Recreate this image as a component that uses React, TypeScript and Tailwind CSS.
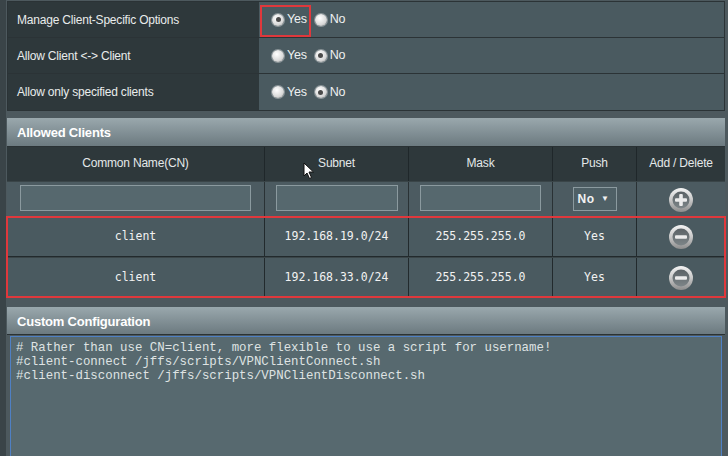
import React from 'react'

function Radio({ checked }: { checked?: boolean }) {
  return (
    <span className="relative inline-flex size-[12px] items-center justify-center rounded-full bg-[radial-gradient(circle_at_40%_35%,#ffffff,#d9d9d9_60%,#9a9a9a)] shadow-[0_0_0_1px_#8a9498]">
      {checked && <span className="size-[5px] rounded-full bg-[#4a4a4a]" />}
    </span>
  )
}

function RoundButton({ kind }: { kind: 'add' | 'del' }) {
  return (
    <svg width="26" height="26" viewBox="0 0 26 26">
      <defs>
        <linearGradient id={`ring-${kind}`} x1="0" y1="0" x2="0" y2="1">
          <stop offset="0" stopColor="#f4f4f4" />
          <stop offset="0.5" stopColor="#c8c8c8" />
          <stop offset="1" stopColor="#8c8c8c" />
        </linearGradient>
        <linearGradient id={`core-${kind}`} x1="0" y1="0" x2="0" y2="1">
          <stop offset="0" stopColor="#5b6266" />
          <stop offset="1" stopColor="#7d8588" />
        </linearGradient>
      </defs>
      <circle cx="13" cy="13" r="12" fill={`url(#ring-${kind})`} />
      <circle cx="13" cy="13" r="8.5" fill={`url(#core-${kind})`} />
      <rect x="7" y="11.2" width="12" height="3.6" rx="1" fill="#ececec" />
      {kind === 'add' && <rect x="11.2" y="7" width="3.6" height="12" rx="1" fill="#ececec" />}
    </svg>
  )
}

function SectionHeader({ title, h }: { title: string; h: string }) {
  return (
    <div className={`${h} flex items-center border-b border-[#2a3235] bg-gradient-to-b from-[#9aa8ad] to-[#6c7a80] pl-[10px] pt-[2px] text-[13px] font-bold text-white`}>
      {title}
    </div>
  )
}

const cols = ['w-[258px]', 'w-[144px]', 'w-[144px]', 'w-[84px]', 'flex-1']

const clients = [
  { cn: 'client', subnet: '192.168.19.0/24', mask: '255.255.255.0', push: 'Yes' },
  { cn: 'client', subnet: '192.168.33.0/24', mask: '255.255.255.0', push: 'Yes' },
]

export default function App() {
  const options = [
    { label: 'Manage Client-Specific Options', yes: true, mark: true },
    { label: 'Allow Client <-> Client', yes: false },
    { label: 'Allow only specified clients', yes: false },
  ]

  return (
    <div className="relative flex h-[456px] w-[728px] overflow-hidden bg-[#4d595e] font-['Liberation_Sans',Arial,sans-serif] text-[12px] tracking-[-0.2px]">
      <div className="w-[6px] shrink-0 bg-[#3a4448]" />
      <div className="flex flex-1 flex-col pr-[3px] pl-[1px]">
        {/* options table */}
        <div className="mt-[1px] border border-[#2b3336]">
          {options.map((o, i) => (
            <div key={i} className={`flex h-[36px] ${i < 2 ? 'border-b border-[#2b3336]' : ''}`}>
              <div className="flex w-[251px] items-center bg-[#2e383b] pl-[9px] text-[#e9ecec]">{o.label}</div>
              <div className="relative flex flex-1 items-center bg-[#4a5a60] pl-[13px] text-[12.5px] text-[#eef0f0]">
                {o.mark && <span className="absolute top-[3px] left-[1px] h-[32px] w-[51px] border-2 border-[#e0383c]" />}
                <span className="flex items-center gap-[3px]">
                  <Radio checked={o.yes} />
                  <span>Yes</span>
                </span>
                <span className="ml-[8px] flex items-center gap-[3px]">
                  <Radio checked={!o.yes} />
                  <span>No</span>
                </span>
              </div>
            </div>
          ))}
        </div>

        <div className="mt-[7px]">
          <SectionHeader title="Allowed Clients" h="h-[29px]" />
          <div className="flex h-[34px] bg-[#2e383b] text-[#e4e8e9]">
            {['Common Name(CN)', 'Subnet', 'Mask', 'Push', 'Add / Delete'].map((t, i) => (
              <div key={t} className={`${cols[i]} flex items-center justify-center pb-[2px] ${i < 4 ? 'border-r border-[#1f272a]' : ''}`}>
                {t}
              </div>
            ))}
          </div>
          <div className="flex h-[36px] border-t border-[#3a4548] bg-[#4c5b61]">
            <div className={`${cols[0]} flex items-center justify-center border-r border-[#2a3235]`}>
              <input className="mb-[3px] h-[26px] w-[231px] border border-[#8b9a9f] bg-[#56686e]" />
            </div>
            <div className={`${cols[1]} flex items-center justify-center border-r border-[#2a3235]`}>
              <input className="mb-[3px] h-[26px] w-[122px] border border-[#8b9a9f] bg-[#56686e]" />
            </div>
            <div className={`${cols[2]} flex items-center justify-center border-r border-[#2a3235]`}>
              <input className="mb-[3px] h-[26px] w-[121px] border border-[#8b9a9f] bg-[#56686e]" />
            </div>
            <div className={`${cols[3]} flex items-center justify-center border-r border-[#2a3235]`}>
              <div className="mb-[2px] flex h-[24px] w-[44px] items-center justify-between border border-[#8b9a9f] bg-[#4f6066] pr-[6px] pl-[4px] text-[12px] font-bold tracking-[0.5px] text-[#f2f2f2]">
                <span>No</span>
                <span className="text-[8px]">▼</span>
              </div>
            </div>
            <div className={`${cols[4]} flex items-center justify-center`}>
              <RoundButton kind="add" />
            </div>
          </div>
          <div className="relative outline-2 -outline-offset-1 outline-[#e0383c]">
            {clients.map((c, r) => (
              <div
                key={r}
                className={`flex h-[40px] bg-[#4a5a60] font-['DejaVu_Sans_Mono',monospace] text-[11.5px] tracking-normal text-[#f2f2f2] ${r === 0 ? 'border-b border-[#222a2d]' : ''} border-t border-[#3a4548]`}
              >
                {[c.cn, c.subnet, c.mask, c.push].map((v, i) => (
                  <div key={i} className={`${cols[i]} flex items-center justify-center border-r border-[#222a2d]`}>
                    {v}
                  </div>
                ))}
                <div className={`${cols[4]} flex items-center justify-center`}>
                  <RoundButton kind="del" />
                </div>
              </div>
            ))}
          </div>
        </div>

        <div className="mt-[10px] flex flex-1 flex-col">
          <SectionHeader title="Custom Configuration" h="h-[28px]" />
          <div className="flex flex-1 bg-[#4d595e] px-[3px] pt-[1px]">
            <textarea
              readOnly
              className="h-[140px] w-full resize-none border border-[#4f80c4] bg-[#57696f] px-[5px] pt-[4px] font-['Liberation_Mono','Courier_New',monospace] text-[12.4px] leading-[14px] tracking-normal text-[#dfe3e3] outline-none"
              value={
                '# Rather than use CN=client, more flexible to use a script for username!\n#client-connect /jffs/scripts/VPNClientConnect.sh\n#client-disconnect /jffs/scripts/VPNClientDisconnect.sh'
              }
            />
          </div>
        </div>
      </div>

      {/* mouse pointer */}
      <svg className="absolute top-[162px] left-[303px]" width="12" height="18" viewBox="0 0 12 18">
        <path d="M1 1 L1 14 L4 11 L6.5 16.5 L8.5 15.5 L6 10 L10.5 10 Z" fill="#ffffff" stroke="#111" strokeWidth="1" strokeLinejoin="round" />
      </svg>
    </div>
  )
}
